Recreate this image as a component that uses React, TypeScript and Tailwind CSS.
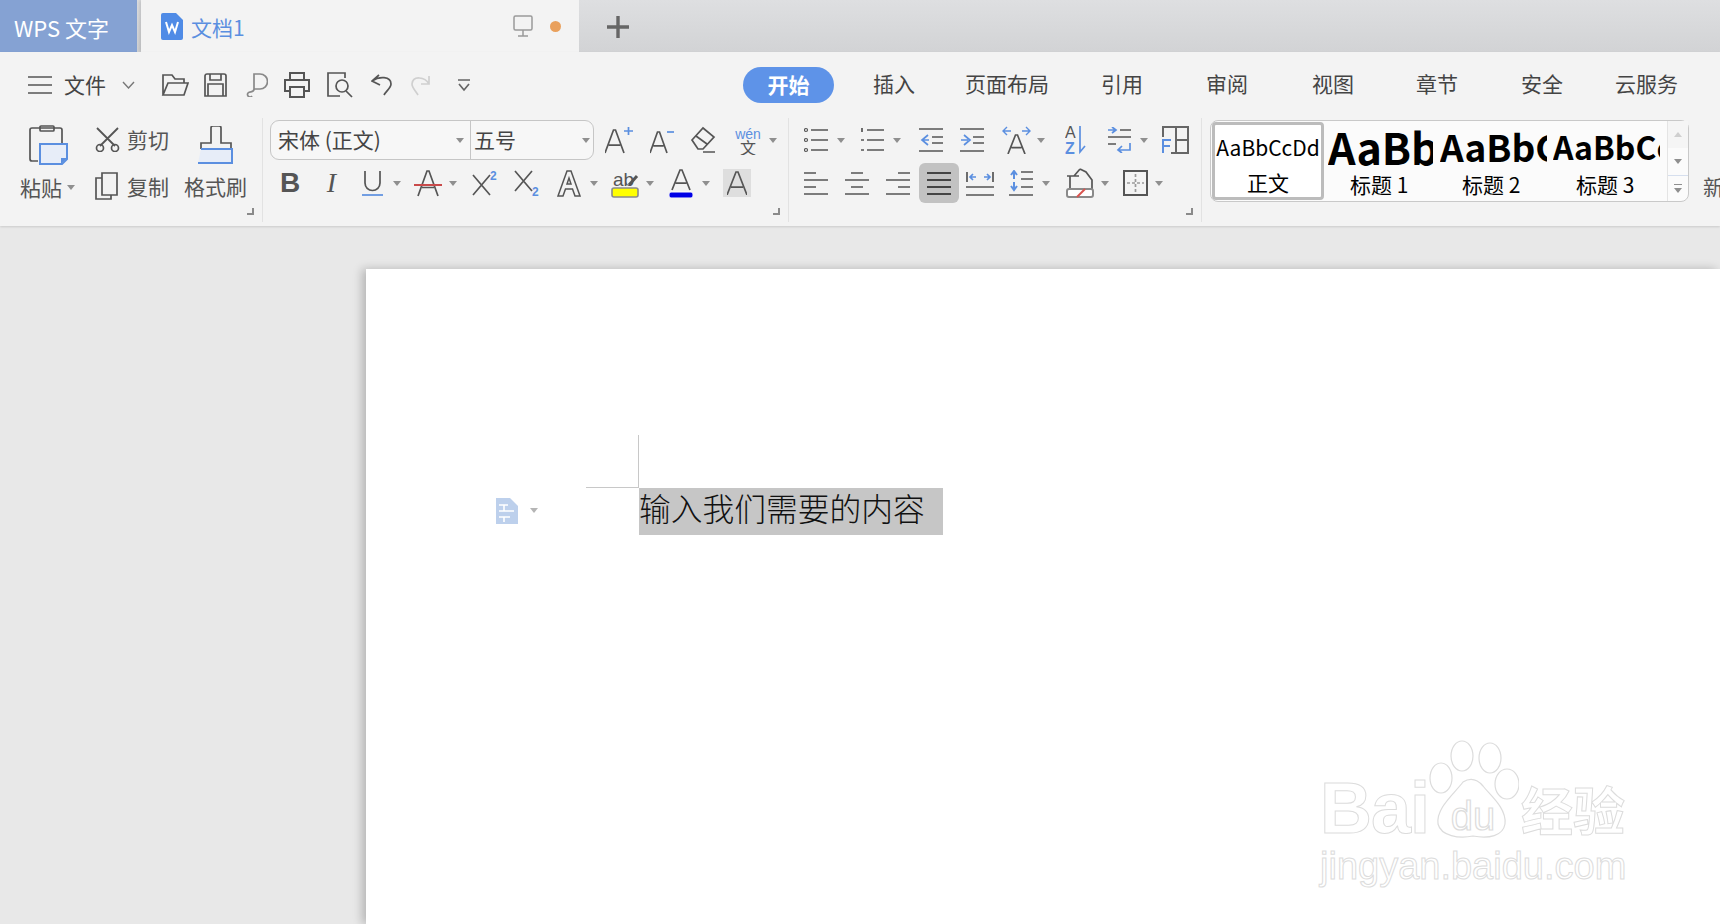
const INK = '#555555';
const BLUE = '#5b8fe0';

function Caret({ className = '' }: { className?: string }) {
  return <span className={`h-0 w-0 shrink-0 border-x-[4px] border-t-[5px] border-x-transparent border-t-[#8f8f8f] ${className}`} />;
}

function Corner() {
  return <span className="absolute bottom-[7px] right-[8px] h-[7px] w-[7px] border-b-2 border-r-2 border-[#8a8a8a]" />;
}

function Ico({ w, h = 28, className = '', children }: { w: number; h?: number; className?: string; children: React.ReactNode }) {
  return (
    <svg width={w} height={h} viewBox={`0 0 ${w} ${h}`} fill="none" stroke={INK} strokeWidth="1.7" className={`shrink-0 ${className}`}>
      {children}
    </svg>
  );
}

function Lines({ w, ys, x = 0 }: { w: number; ys: number[]; x?: number }) {
  return <path d={ys.map((y) => `M${x} ${y}H${w}`).join('')} />;
}

function LetterA({ x = 0, w = 20, top = 4, bottom = 27 }: { x?: number; w?: number; top?: number; bottom?: number }) {
  const mid = x + w / 2;
  const bar = top + (bottom - top) * 0.66;
  return <path d={`M${x} ${bottom}L${mid - 1} ${top}h2L${x + w} ${bottom}M${x + w * 0.2} ${bar}H${x + w * 0.8}`} />;
}

export default function App() {
  const tabClass = '-mt-[3px] text-[21px] leading-none text-[#444] whitespace-nowrap';
  const labelClass = 'text-[21px] leading-[30px] text-[#555] whitespace-nowrap';

  return (
    <div className="relative flex h-screen w-full flex-col overflow-hidden bg-[#e8e8e8] font-['Noto_Sans_CJK_SC','Noto_Sans',sans-serif]">
      {/* title bar */}
      <div className="flex h-[52px] shrink-0 bg-gradient-to-b from-[#dedfe1] to-[#d2d3d5]">
        <div className="flex w-[137px] items-center bg-[#85a2d3] pl-[14px] pt-[3px] text-[22px] text-white">WPS 文字</div>
        <div className="ml-[4px] flex w-[438px] items-center bg-[#f3f3f3] shadow-[-2px_0_3px_rgba(0,0,0,0.12)]">
          <svg width="22" height="27" viewBox="0 0 22 27" className="ml-[20px] shrink-0">
            <path d="M2 0H15L22 7V25a2 2 0 0 1-2 2H2a2 2 0 0 1-2-2V2a2 2 0 0 1 2-2Z" fill="#4f8be6" />
            <path d="M5 9L8 19L11 12L14 19L17 9" fill="none" stroke="#fff" strokeWidth="2" />
          </svg>
          <span className="ml-[8px] pt-[3px] text-[21px] text-[#5b8fe0]">文档1</span>
          <svg width="20" height="22" viewBox="0 0 20 22" fill="none" stroke="#9a9a9a" strokeWidth="1.5" className="ml-[268px] shrink-0">
            <rect x="1" y="1" width="18" height="14" rx="1.5" />
            <path d="M10 15v6M5 21h10" />
          </svg>
          <span className="ml-[17px] h-[11px] w-[11px] rounded-full bg-[#e9a05c]" />
        </div>
        <svg width="22" height="22" viewBox="0 0 22 22" stroke="#666" strokeWidth="3.4" className="ml-[28px] mt-[16px] shrink-0">
          <path d="M0 11H22M11 0V22" />
        </svg>
      </div>

      {/* ribbon */}
      <div className="h-[174px] shrink-0 bg-[#f3f3f3] shadow-[0_1px_2px_rgba(0,0,0,0.12)]">
        {/* quick access and tabs */}
        <div className="flex h-[66px] items-center">
          <Ico w={24} h={18} className="ml-[28px]"><Lines w={24} ys={[1, 9, 17]} /></Ico>
          <span className="-mt-[2px] ml-[12px] text-[21px] leading-none text-[#444]">文件</span>
          <svg width="13" height="8" viewBox="0 0 13 8" fill="none" stroke="#777" strokeWidth="1.4" className="ml-[16px] shrink-0">
            <path d="M1 1L6.5 7L12 1" />
          </svg>
          <Ico w={28} h={24} className="ml-[26px]">
            <path d="M2 22V2H11L14 6H23V10M2 22H23L27 10H7L2 22Z" />
          </Ico>
          <Ico w={23} h={24} className="ml-[15px]">
            <path d="M1 3a2 2 0 0 1 2-2H20a2 2 0 0 1 2 2V23H1ZM6 1V7H17V1M4 23V11H19V23" />
          </Ico>
          <Ico w={23} h={24} className="ml-[18px]">
            <path d="M9 17V1H15a7.500 7.500 0 0 1 0 15H9C9 20 5 18 3 20a2.500 2.500 0 1 0 4 3" stroke="#888" />
          </Ico>
          <Ico w={26} h={26} className="ml-[16px]" >
            <path d="M6 8V1H20V8M6 19H1V8H25V19H20M6 15H20V25H6Z" strokeWidth="2" />
          </Ico>
          <Ico w={26} h={26} className="ml-[17px]">
            <path d="M13 24H1V1H18V6" />
            <circle cx="15" cy="14" r="6" />
            <path d="M19 19L25 25" />
          </Ico>
          <Ico w={21} h={22} className="ml-[18px]">
            <path d="M8 1L1 7L9 11M1 7C8 2 20 2 20 10C20 14 15 17 13 21" />
          </Ico>
          <Ico w={20} h={22} className="ml-[19px]">
            <path d="M18 2V10H10M18 10C14 3 2 1 1 10C1 14 5 17 7 21" stroke="#cfcfcf" />
          </Ico>
          <Ico w={14} h={14} className="ml-[26px]">
            <path d="M1 2H13M2 6L7 12L12 6" stroke="#666" />
          </Ico>

          <div className="ml-[272px] flex h-[36px] w-[91px] items-center justify-center rounded-full bg-[#5e93e8] text-[21px] font-bold text-white">开始</div>
          <span className={`ml-[39px] ${tabClass}`}>插入</span>
          <span className={`ml-[50px] ${tabClass}`}>页面布局</span>
          <span className={`ml-[52px] ${tabClass}`}>引用</span>
          <span className={`ml-[63px] ${tabClass}`}>审阅</span>
          <span className={`ml-[64px] ${tabClass}`}>视图</span>
          <span className={`ml-[62px] ${tabClass}`}>章节</span>
          <span className={`ml-[63px] ${tabClass}`}>安全</span>
          <span className={`ml-[52px] ${tabClass}`}>云服务</span>
        </div>

        <div className="flex h-[104px]">
          {/* clipboard */}
          <div className="relative flex w-[263px] shrink-0 border-r border-[#e2e2e2]">
            <div className="ml-[20px] flex w-[55px] flex-col">
              <svg width="40" height="40" viewBox="0 0 40 40" fill="none" stroke={INK} strokeWidth="1.7" className="ml-[9px] mt-[7px]">
                <path d="M9 36H3a2 2 0 0 1-2-2V5a2 2 0 0 1 2-2H31a2 2 0 0 1 2 2V18" />
                <rect x="11" y="1" width="14" height="5" rx="1" />
                <path d="M11 19H38V34L33 39H11Z" fill="#e7edf8" stroke={BLUE} strokeWidth="2" />
                <path d="M38 33L32 39V33Z" fill={BLUE} stroke="none" />
              </svg>
              <div className="mt-[7px] flex items-center">
                <span className={labelClass}>粘贴</span>
                <Caret className="ml-[5px]" />
              </div>
            </div>
            <div className="ml-[20px] flex w-[90px] flex-col">
              <div className="mt-[8px] flex h-[26px] items-center">
                <Ico w={25} h={25}>
                  <path d="M2 1L20 19M23 1L5 19" strokeWidth="1.8" />
                  <circle cx="5" cy="21" r="3.500" />
                  <circle cx="20" cy="21" r="3.500" />
                </Ico>
                <span className={`ml-[7px] ${labelClass}`}>剪切</span>
              </div>
              <div className="mt-[19px] flex h-[30px] items-center">
                <Ico w={23} h={28}>
                  <path d="M7 23V1H22V23ZM7 6H1V27H16V23" />
                </Ico>
                <span className={`ml-[9px] ${labelClass}`}>复制</span>
              </div>
            </div>
            <div className="flex w-[62px] flex-col">
              <svg width="38" height="38" viewBox="0 0 38 38" fill="none" stroke={INK} strokeWidth="1.7" className="ml-[12px] mt-[8px]">
                <path d="M4 23V17H14V2a2 2 0 0 1 2-2H22a2 2 0 0 1 2 2V17H34V23" />
                <path d="M4 23H35V37H1" fill="#e7edf8" stroke={BLUE} strokeWidth="2" />
              </svg>
              <span className={`mt-[7px] -ml-[1px] ${labelClass}`}>格式刷</span>
            </div>
            <Corner />
          </div>

          {/* font */}
          <div className="relative flex w-[526px] shrink-0 flex-col border-r border-[#e2e2e2]">
            <div className="mt-[2px] flex h-[40px] items-center">
              <div className="ml-[7px] flex h-[40px] w-[324px] rounded-[9px] border border-[#c6c6c6] bg-[#f7f7f7]">
                <div className="flex w-[200px] items-center border-r border-[#c6c6c6]">
                  <span className="ml-[7px] w-[178px] text-[21px] text-[#444]">宋体 (正文)</span>
                  <Caret />
                </div>
                <div className="flex flex-1 items-center">
                  <span className="ml-[3px] w-[108px] text-[21px] text-[#444]">五号</span>
                  <Caret />
                </div>
              </div>
              <Ico w={28} className="ml-[11px]">
                <LetterA w={19} />
                <path d="M19 5H28M23.500 1V9" stroke={BLUE} />
              </Ico>
              <Ico w={24} className="ml-[17px]">
                <LetterA w={17} top={6} />
                <path d="M17 6H24" stroke={BLUE} />
              </Ico>
              <Ico w={26} className="ml-[16px]">
                <path d="M2 14L13 2L24 11L13 23H8ZM6 10L17 18M13 26H25" />
              </Ico>
              <svg width="28" height="30" viewBox="0 0 28 30" className="ml-[18px] shrink-0">
                <text x="14" y="14" textAnchor="middle" fontSize="14" fill={BLUE} fontFamily="Liberation Sans">wén</text>
                <text x="14" y="29" textAnchor="middle" fontSize="16" fill={INK} fontFamily="Noto Sans CJK SC">文</text>
              </svg>
              <Caret className="ml-[7px]" />
            </div>
            <div className="mt-[3px] flex h-[40px] items-center">
              <span className="ml-[17px] w-[20px] text-center font-['Liberation_Sans',sans-serif] text-[28px] font-bold leading-none text-[#555]">B</span>
              <span className="ml-[25px] w-[13px] text-center font-['Liberation_Serif',serif] text-[28px] italic leading-none text-[#555]">I</span>
              <Ico w={21} className="ml-[24px]">
                <path d="M3 2V14a7.500 7.500 0 0 0 15 0V2" />
                <path d="M0 26H21" stroke={BLUE} />
              </Ico>
              <Caret className="ml-[10px]" />
              <Ico w={28} className="ml-[13px]">
                <LetterA x={4} w={20} top={2} bottom={27} />
                <path d="M0 16H28" stroke="#c94a4a" strokeWidth="2" />
              </Ico>
              <Caret className="ml-[7px]" />
              <svg width="26" height="28" viewBox="0 0 26 28" fill="none" stroke={INK} strokeWidth="1.7" className="ml-[15px] shrink-0">
                <path d="M1 6L18 26M18 6L1 26" />
                <text x="18" y="11" fontSize="12" fontWeight="700" fill={BLUE} stroke="none" fontFamily="Liberation Sans">2</text>
              </svg>
              <svg width="26" height="28" viewBox="0 0 26 28" fill="none" stroke={INK} strokeWidth="1.7" className="ml-[16px] shrink-0">
                <path d="M1 2L18 22M18 2L1 22" />
                <text x="18" y="27" fontSize="12" fontWeight="700" fill={BLUE} stroke="none" fontFamily="Liberation Sans">2</text>
              </svg>
              <Ico w={24} className="ml-[17px]">
                <path d="M1 27L10 2H14L23 27H18L15.500 20H8.500L6 27ZM10 15H14L12 9Z" strokeWidth="1.5" />
              </Ico>
              <Caret className="ml-[9px]" />
              <svg width="28" height="30" viewBox="0 0 28 30" fill="none" stroke={INK} strokeWidth="1.6" className="ml-[13px] shrink-0">
                <text x="2" y="18" fontSize="19" fill={INK} stroke="none" fontFamily="Liberation Sans">ab</text>
                <path d="M18 17L26 8" strokeWidth="3" />
                <rect x="1" y="20" width="26" height="9" rx="2" fill="#ffff00" stroke="#8a8a8a" />
              </svg>
              <Caret className="ml-[7px]" />
              <Ico w={24} h={30} className="ml-[15px]">
                <LetterA x={3} w={18} top={2} bottom={22} />
                <rect x="0" y="24" width="24" height="6" rx="2" fill="#0000e6" stroke="#ffffff" strokeWidth="1" />
              </Ico>
              <Caret className="ml-[9px]" />
              <div className="ml-[13px] flex h-[28px] w-[28px] items-center justify-center bg-[#dedede]">
                <Ico w={20} h={24}><LetterA w={20} top={1} bottom={24} /></Ico>
              </div>
            </div>
            <Corner />
          </div>

          {/* paragraph */}
          <div className="relative flex w-[413px] shrink-0 flex-col border-r border-[#e2e2e2]">
            <div className="mt-[2px] flex h-[40px] items-center">
              <Ico w={24} h={26} className="ml-[15px]">
                <Lines w={24} x={7} ys={[3, 13, 23]} />
                <circle cx="2" cy="3" r="1.500" strokeWidth="1.200" />
                <circle cx="2" cy="13" r="1.500" strokeWidth="1.200" />
                <circle cx="2" cy="23" r="1.500" strokeWidth="1.200" />
              </Ico>
              <Caret className="ml-[9px]" />
              <Ico w={24} h={26} className="ml-[15px]">
                <Lines w={24} x={7} ys={[3, 13, 23]} />
                <path d="M2 1V5M1 13h3M1 23h3" />
              </Ico>
              <Caret className="ml-[9px]" />
              <Ico w={24} h={26} className="ml-[18px]">
                <Lines w={24} ys={[2, 24]} />
                <path d="M13 10H24M13 16H24" />
                <path d="M9 8L3 13L9 18M3 13H10" stroke={BLUE} />
              </Ico>
              <Ico w={24} h={26} className="ml-[17px]">
                <Lines w={24} ys={[2, 24]} />
                <path d="M13 10H24M13 16H24" />
                <path d="M1 13H8M4 8L10 13L4 18" stroke={BLUE} />
              </Ico>
              <Ico w={29} className="ml-[18px]">
                <LetterA x={6} w={17} top={9} bottom={28} />
                <path d="M5 1L1 5L5 9M1 5H9M24 1L28 5L24 9M20 5H28" stroke={BLUE} strokeWidth="1.400" />
              </Ico>
              <Caret className="ml-[6px]" />
              <svg width="22" height="30" viewBox="0 0 22 30" fill="none" className="ml-[20px] shrink-0">
                <text x="0" y="13" fontSize="16" fill={INK} fontFamily="Liberation Sans">A</text>
                <text x="0" y="29" fontSize="16" fontWeight="700" fill={BLUE} fontFamily="Liberation Sans">Z</text>
                <path d="M15 1V27L20 21" stroke={BLUE} strokeWidth="1.700" />
              </svg>
              <Ico w={24} h={26} className="ml-[20px]">
                <path d="M13 3H24M1 10H24M1 17H9" />
                <path d="M1 3H8M5 0L9 3L5 6" stroke={BLUE} />
                <path d="M23 16V23H11M15 19L11 23L15 26" stroke={BLUE} />
              </Ico>
              <Caret className="ml-[9px]" />
              <Ico w={27} h={28} className="ml-[14px]">
                <path d="M1 11V1H26V27H9M14 1V27M14 14H26" stroke="#666" strokeWidth="2" />
                <path d="M1 27V14H9M1 20H8" stroke={BLUE} strokeWidth="2" />
              </Ico>
            </div>
            <div className="mt-[3px] flex h-[40px] items-center">
              <Ico w={24} h={24} className="ml-[15px]"><path d="M0 2H12M0 9H24M0 16H12M0 23H24" /></Ico>
              <Ico w={24} h={24} className="ml-[17px]"><path d="M6 2H18M0 9H24M6 16H18M0 23H24" /></Ico>
              <Ico w={24} h={24} className="ml-[17px]"><path d="M12 2H24M0 9H24M12 16H24M0 23H24" /></Ico>
              <div className="ml-[9px] flex h-[40px] w-[40px] items-center justify-center rounded-[6px] bg-[#c2c2c2]">
                <Ico w={24} h={24}><path d="M0 2H24M0 9H24M0 16H24M0 23H24" stroke="#444" strokeWidth="2" /></Ico>
              </div>
              <Ico w={28} h={26} className="ml-[7px]">
                <path d="M0 17H28M0 25H28M1 2V12M27 2V12" />
                <path d="M10 7H4M7 4L4 7L7 10M18 7H24M21 4L24 7L21 10" stroke={BLUE} />
              </Ico>
              <Ico w={24} h={26} className="ml-[15px]">
                <path d="M12 2H24M12 9H24M12 17H24M0 25H24" />
                <path d="M5 2V9M2 5L5 1L8 5M5 12V19M2 16L5 20L8 16" stroke={BLUE} strokeWidth="2" />
              </Ico>
              <Caret className="ml-[9px]" />
              <Ico w={28} h={30} className="ml-[16px]">
                <path d="M1 8H13M4 8V21M14 1L20 4L26 12L26 21M14 1L8 8" />
                <rect x="1" y="21" width="26" height="8" rx="2" fill="#ffffff" stroke="#8a8a8a" strokeWidth="2" />
                <path d="M11 29L19 21" stroke="#d9534f" strokeWidth="2" />
              </Ico>
              <Caret className="ml-[7px]" />
              <Ico w={25} h={26} className="ml-[14px]">
                <rect x="1" y="1" width="23" height="24" strokeWidth="2" />
                <path d="M12.500 4V22M4 13H21" stroke="#9a9a9a" strokeDasharray="3 2" />
              </Ico>
              <Caret className="ml-[7px]" />
            </div>
            <Corner />
          </div>

          {/* styles */}
          <div className="flex flex-1 overflow-hidden">
            <div className="ml-[8px] mt-[2px] flex h-[82px] w-[479px] shrink-0 rounded-[8px] border border-[#c9c9c9] bg-[#fbfbfb] text-black">
              <div className="ml-px mt-px flex h-[78px] w-[112px] shrink-0 flex-col items-center overflow-hidden rounded-[4px] border-[3px] border-[#bcbcbc] bg-white">
                <span className="mt-[4px] h-[42px] text-[21px] leading-[36px] whitespace-nowrap">AaBbCcDd</span>
                <span className="text-[21px] leading-[22px]">正文</span>
              </div>
              <div className="ml-[4px] flex w-[105px] shrink-0 flex-col overflow-hidden">
                <span className="h-[50px] text-[43px] font-bold leading-[50px] whitespace-nowrap">AaBb</span>
                <span className="pl-[22px] text-[21px] leading-[26px] whitespace-nowrap">标题 1</span>
              </div>
              <div className="ml-[7px] flex w-[107px] shrink-0 flex-col overflow-hidden">
                <span className="h-[50px] text-[37px] font-bold leading-[50px] whitespace-nowrap">AaBbCc</span>
                <span className="pl-[22px] text-[21px] leading-[26px] whitespace-nowrap">标题 2</span>
              </div>
              <div className="ml-[6px] flex w-[107px] shrink-0 flex-col overflow-hidden">
                <span className="h-[50px] text-[32px] font-bold leading-[50px] whitespace-nowrap">AaBbCcDd</span>
                <span className="pl-[23px] text-[21px] leading-[26px] whitespace-nowrap">标题 3</span>
              </div>
              <div className="ml-auto flex w-[21px] shrink-0 flex-col border-l border-[#e4e4e4]">
                <div className="flex h-[27px] items-center justify-center bg-[#f5f5f5]">
                  <span className="h-0 w-0 border-x-[4px] border-b-[5px] border-x-transparent border-b-[#cfcfcf]" />
                </div>
                <div className="flex h-[28px] items-center justify-center border-b border-[#d6dfee]">
                  <Caret />
                </div>
                <div className="flex flex-1 flex-col items-center justify-center gap-[3px]">
                  <span className="h-px w-[8px] bg-[#8f8f8f]" />
                  <Caret />
                </div>
              </div>
            </div>
            <span className="ml-[14px] mt-[53px] text-[21px] leading-[30px] text-[#555]">新</span>
          </div>
        </div>
      </div>

      {/* document */}
      <div className="ml-[366px] mt-[43px] flex-1 bg-white shadow-[-4px_0_9px_rgba(0,0,0,0.22)]">
        <div className="ml-[220px] mt-[166px] h-[53px] w-[53px] border-b border-r border-[#c8c8c8]" />
        <div className="flex h-[47px] items-center pl-[130px]">
          <svg width="22" height="26" viewBox="0 0 22 26" className="-mt-[2px] shrink-0">
            <path d="M0 0H14L22 8V26H0Z" fill="#bdd0ec" />
            <path d="M3 7H12M8 7V13M3 13H18M3 19H14M8 19V24" stroke="#fff" strokeWidth="1.600" />
          </svg>
          <Caret className="-mt-[2px] ml-[12px] border-t-[#b5b5b5]" />
          <div className="ml-[101px] flex h-[47px] w-[304px] items-center bg-[#c6c6c6] pb-[8px] text-[31.750px] font-extralight text-[#111]">输入我们需要的内容</div>
        </div>
      </div>

      {/* watermark */}
      <div className="absolute bottom-[38px] left-[1320px] flex flex-col font-['Liberation_Sans',sans-serif] text-white [-webkit-text-stroke:1px_#dcdcdc]">
        <div className="flex h-[100px] items-end">
          <span className="text-[72px] font-bold leading-[64px] tracking-[-1px]">Bai</span>
          <svg width="92" height="100" viewBox="0 0 92 100" fill="#fff" stroke="#dcdcdc" strokeWidth="1.200" className="-ml-[2px] shrink-0">
            <ellipse cx="14" cy="38" rx="11" ry="15" />
            <ellipse cx="35" cy="16" rx="11" ry="15" />
            <ellipse cx="63" cy="18" rx="11" ry="15" />
            <ellipse cx="80" cy="44" rx="12" ry="15" />
            <path d="M36 42c8-5 14-3 20 4c6 8 24 22 22 38c-2 12-16 15-32 12c-14 3-32 0-35-12c-2-16 16-30 25-42Z" />
            <text x="46" y="90" textAnchor="middle" fontSize="40" fontFamily="Liberation Sans" stroke="#dcdcdc">du</text>
          </svg>
          <span className="ml-[2px] font-['Noto_Sans_CJK_SC',sans-serif] text-[52px] font-bold leading-[62px]">经验</span>
        </div>
        <span className="mt-[6px] text-[38px] leading-[40px] whitespace-nowrap">jingyan.baidu.com</span>
      </div>
    </div>
  );
}
